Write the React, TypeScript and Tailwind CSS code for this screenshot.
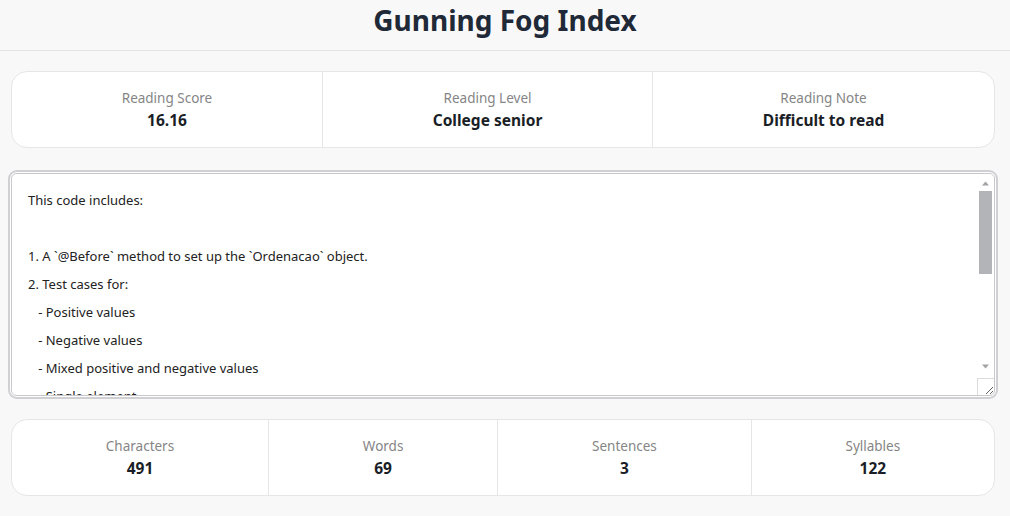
import React from "react";

const text = `This code includes:

1. A \`@Before\` method to set up the \`Ordenacao\` object.
2. Test cases for:
   - Positive values
   - Negative values
   - Mixed positive and negative values
   - Single element
   - Empty array
   - Array with duplicate values
   - Already sorted array
   - Reverse sorted array
3. Each test checks if the array is sorted correctly after calling the \`ordenar\` method.

Make sure to adjust the package and class names according to your project structure.`;

function Stat({ label, value, first }: { label: string; value: string; first?: boolean }) {
  return (
    <div className={`flex-auto pt-4 pb-[15px] text-center ${first ? "" : "border-l border-[#e6e6e6]"}`}>
      <div className="text-[13.5px] leading-5 text-[#858585]">{label}</div>
      <div className="text-[15.5px] leading-6 font-bold text-[#1a1e26]">{value}</div>
    </div>
  );
}

export default function App() {
  return (
    <div className="min-h-screen bg-[#f8f8f8]" style={{ fontFamily: '"Noto Sans", "Open Sans", sans-serif' }}>
      <header className="border-b border-[#e3e3e3] pt-[2px] pb-[12px] text-center">
        <h1 className="text-[28px] leading-9 font-bold text-[#1f2937]">Gunning Fog Index</h1>
      </header>
      <main className="pl-[11px] pr-[15px] pt-5">
        <div className="flex rounded-2xl border border-[#e6e6e6] bg-white">
          <Stat first label="Reading Score" value="16.16" />
          <Stat label="Reading Level" value="College senior" />
          <Stat label="Reading Note" value="Difficult to read" />
        </div>
        <div className="relative mt-[25px] h-[223px] rounded-md ring-2 ring-[#d0d0d4] ring-offset-1 ring-offset-white">
          <textarea
            className="block h-full w-full rounded-md border border-[#c8c8cc] bg-white py-3 pl-4 pr-[34px] text-[13px] leading-7 text-[#222] outline-none [scrollbar-width:none]"
            defaultValue={text}
          />
          <div className="pointer-events-none absolute top-[1px] right-[1px] bottom-[1px] w-[17px]">
            <svg className="absolute top-[7px] left-[5px]" width="7" height="5" viewBox="0 0 7 5">
              <path d="M0 4.5 L3.5 0.5 L7 4.5 Z" fill="#a3a3a6" />
            </svg>
            <div className="absolute top-[17px] left-[2px] h-[83px] w-[13px] bg-[#b3b4b8]" />
            <svg className="absolute bottom-[26px] left-[5px]" width="7" height="5" viewBox="0 0 7 5">
              <path d="M0 0.5 L3.5 4.5 L7 0.5 Z" fill="#a3a3a6" />
            </svg>
            <div className="absolute right-0 bottom-0 h-[17px] w-[17px] border-t border-l border-[#dcdcdc]" />
          </div>
        </div>
        <div className="mt-[23px] flex rounded-2xl border border-[#e6e6e6] bg-white">
          <Stat first label="Characters" value="491" />
          <Stat label="Words" value="69" />
          <Stat label="Sentences" value="3" />
          <Stat label="Syllables" value="122" />
        </div>
      </main>
    </div>
  );
}
